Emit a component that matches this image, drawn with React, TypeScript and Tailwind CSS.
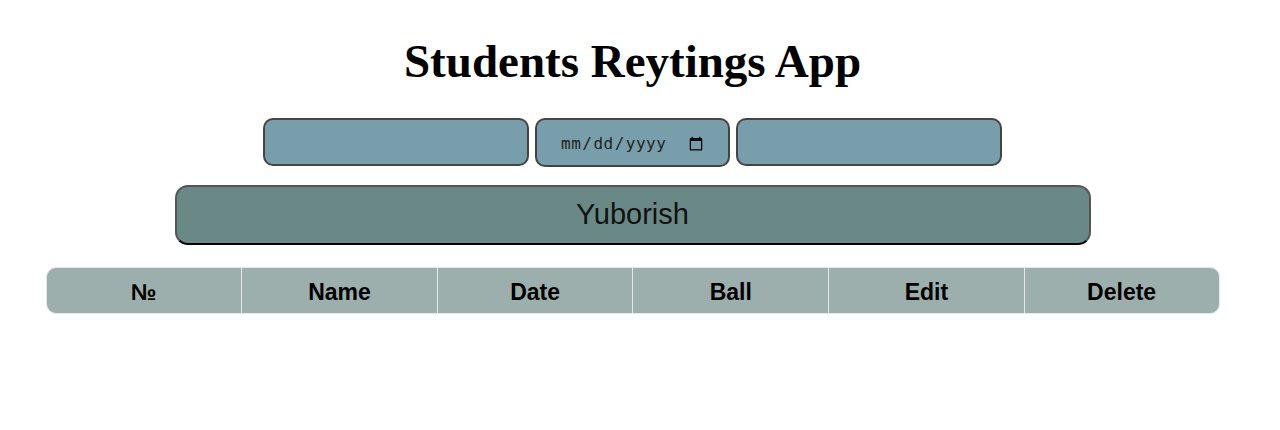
import { useState } from 'react'

const columns = ['№', 'Name', 'Date', 'Ball', 'Edit', 'Delete']

export default function App(): React.ReactElement {
  const [name, setName] = useState('')
  const [date, setDate] = useState('')
  const [ball, setBall] = useState('')

  return (
    <div className="w-[1265px] flex flex-col items-center bg-white font-['Liberation_Sans',Arial,sans-serif]">
      <h1 className="mt-[32px] text-[47px] leading-[58px] font-bold font-['Liberation_Serif','Times_New_Roman',serif] text-black">
        Students Reytings App
      </h1>

      <div className="mt-[28px] flex gap-[6px]">
        <input
          value={name}
          onChange={(e) => setName(e.target.value)}
          className="w-[266px] h-[48px] rounded-[10px] border-2 border-[#444] bg-[#799eab] px-3 outline-none"
        />
        <input
          type="date"
          value={date}
          onChange={(e) => setDate(e.target.value)}
          className="w-[195px] h-[49px] rounded-[10px] border-2 border-[#444] bg-[#799eab] pl-[23px] pr-[22px] pt-[2px] text-[16px] tracking-[0.5px] font-['DejaVu_Sans_Mono',monospace] text-[#222] outline-none"
        />
        <input
          value={ball}
          onChange={(e) => setBall(e.target.value)}
          className="w-[266px] h-[48px] rounded-[10px] border-2 border-[#444] bg-[#799eab] px-3 outline-none"
        />
      </div>

      <button className="mt-[18px] w-[916px] h-[60px] rounded-[13px] border-2 border-[#555] border-b-black bg-[#6a8986] text-[29px] text-[#111]">
        Yuborish
      </button>

      <table className="mt-[22px] w-[1174px] border-separate border-spacing-0">
        <thead>
          <tr>
            {columns.map((c, i) => (
              <th
                key={c}
                className={
                  'h-[47px] w-1/6 pt-[3px] bg-[#9cafac] text-[23px] font-bold text-black border-t border-b border-[#e4e8e7] ' +
                  (i === 0 ? 'rounded-l-[10px] border-l ' : 'border-l ') +
                  (i === columns.length - 1 ? 'rounded-r-[10px] border-r' : '')
                }
              >
                {c}
              </th>
            ))}
          </tr>
        </thead>
        <tbody />
      </table>
    </div>
  )
}
